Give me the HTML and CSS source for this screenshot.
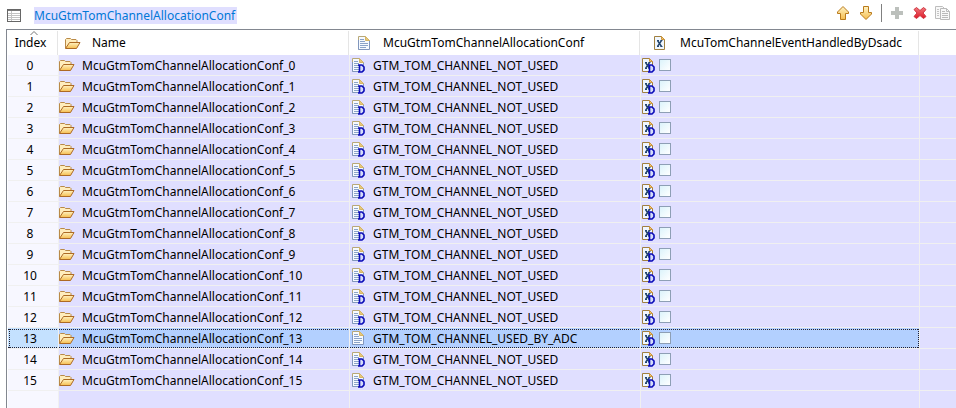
FILE: index.html
```
<!DOCTYPE html>
<html lang="en">
<head>
<meta charset="utf-8">
<title>McuGtmTomChannelAllocationConf</title>
<link rel="stylesheet" href="styles.css">
</head>
<body>
<svg class="sprites" aria-hidden="true">
  <defs>
    <linearGradient id="gold" x1="0" y1="0" x2="0" y2="1">
      <stop offset="0" stop-color="#fff3c4"/><stop offset="1" stop-color="#f5bd4e"/>
    </linearGradient>
    <linearGradient id="red" x1="0" y1="0" x2="0" y2="1">
      <stop offset="0" stop-color="#f0787d"/><stop offset="1" stop-color="#dd1826"/>
    </linearGradient>
    <symbol id="folder" viewBox="0 0 16 16">
      <path d="M.5 13V4.500l1-1h4l1 1h4.500l1 1v2" fill="#ffedbd" stroke="#b98a48"/>
      <path d="M.5 13.500l4-6h10.500l-3.500 6z" fill="url(#gold)" stroke="#ad6a24"/>
    </symbol>
    <symbol id="doc" viewBox="0 0 16 16">
      <path d="M.5 1.500h7l4 4v9H.5z" fill="#f6faff"/>
      <path d="M.5 14.500v-13h7l4 4" fill="none" stroke="#b8a878"/>
      <path d="M.5 5v9.500h11V5.500" fill="none" stroke="#8196bd"/>
      <path d="M7.500 1.500v4h4z" fill="#e6c87c" stroke="#d5b566"/>
      <path d="M2 4.500h4M2 6.500h5M2 8.500h8M2 10.500h8M2 12.500h6" stroke="#8ba3c8"/>
    </symbol>
    <symbol id="xdoc" viewBox="0 0 16 16">
      <path d="M.5 1.500h7l3 3v10H.5z" fill="#f0f7ff" stroke="#a08040"/>
      <path d="M7.500 1.500v3h3z" fill="#f0c878" stroke="#cc963d"/>
      <path d="M3 5.500h2M6.500 5.500h2M3 11.500h2M6.500 11.500h2" stroke="#24466f"/>
      <path d="M3.500 5.500l4 6M7.500 5.500l-4 6" stroke="#24466f" stroke-width="1.400"/>
    </symbol>
    <symbol id="badge" viewBox="0 0 16 16">
      <path d="M7 8h3.500l2 2v3l-2 2H7z" fill="#d5dcfa"/>
      <path d="M6 8h4l2 2v3l-2 2H6M7.500 8v7" fill="none" stroke="#0a0ab8" stroke-width="1.600"/>
    </symbol>
  </defs>
</svg>

<header class="bar">
  <svg class="list-icon" viewBox="0 0 14 13" aria-hidden="true">
    <rect x=".5" y=".5" width="13" height="12" fill="#fff" stroke="#666"/>
    <path d="M1 1.500h12" stroke="#777"/>
    <path d="M1 4.500h12M1 6.500h12M1 8.500h12M1 10.500h12M4.500 2v10" stroke="#c2c2c2"/>
  </svg>
  <a class="title" href="#list">McuGtmTomChannelAllocationConf</a>
  <div class="tools">
    <button type="button" class="tool" aria-label="Move up">
      <svg viewBox="0 0 16 16"><path d="M8 1.500l5.500 5.500v1.500H10.500v6h-5v-6H2.500V7z" fill="url(#gold)" stroke="#b97a1c"/></svg>
    </button>
    <button type="button" class="tool" aria-label="Move down">
      <svg viewBox="0 0 16 16"><path d="M8 14.500L2.500 9V7.500H5.500v-6h5v6h3V9z" fill="url(#gold)" stroke="#b97a1c"/></svg>
    </button>
    <span class="divider"></span>
    <button type="button" class="tool" aria-label="Add" disabled>
      <svg viewBox="0 0 16 16"><path d="M6 2h4v4h4v4h-4v4H6v-4H2V6h4z" fill="#bcc0bc"/></svg>
    </button>
    <button type="button" class="tool" aria-label="Delete">
      <svg viewBox="0 0 16 16"><path d="M4.500 2.500L8 5.500l3.500-3 2.500 2L11 8l3 3.500-2.500 2L8 10.500l-3.500 3L2 11.500 5 8 2 4.500z" fill="url(#red)" stroke="#cf3540"/></svg>
    </button>
    <button type="button" class="tool" aria-label="Duplicate" disabled>
      <svg viewBox="0 0 16 16">
        <path d="M.5 1.500h7l3 3v9H.5z" fill="#f8f8f8" stroke="#bdbdbd"/>
        <path d="M2 4.500h2M2 6.500h2M2 8.500h2M2 10.500h2" stroke="#c4c4c4"/>
        <path d="M5.500 3.500h6l3 3v8h-9z" fill="#f8f8f8" stroke="#bababa"/>
        <path d="M11.500 3.500v3h3M7 6.500h3M7 8.500h6M7 10.500h6M7 12.500h6" fill="none" stroke="#bababa"/>
      </svg>
    </button>
  </div>
</header>

<main class="panel" id="list">
  <table>
    <colgroup><col class="c-index"><col class="c-name"><col class="c-conf"><col class="c-event"><col></colgroup>
    <thead>
      <tr>
        <th class="index" aria-sort="ascending">
          <svg class="sort" viewBox="0 0 8 4" aria-hidden="true"><path d="M.5 4L4 .5 7.500 4" fill="none" stroke="#777"/></svg>Index</th>
        <th><div class="head"><svg class="icon" aria-hidden="true"><use href="#folder"/></svg>Name</div></th>
        <th><div class="head wide"><svg class="icon" aria-hidden="true"><use href="#doc"/></svg>McuGtmTomChannelAllocationConf</div></th>
        <th><div class="head wider"><svg class="icon" aria-hidden="true"><use href="#xdoc"/></svg>McuTomChannelEventHandledByDsadc</div></th>
        <td></td>
      </tr>
    </thead>
    <tbody id="rows"></tbody>
  </table>
</main>
<script src="rows.js"></script>
</body>
</html>
```
FILE: styles.css
```
* {
  box-sizing: border-box;
}

body {
  margin: 0;
  height: 100vh;
  display: flex;
  flex-direction: column;
  overflow: hidden;
  background: #fff;
  color: #000;
  font: 12px/17px "Noto Sans", "Open Sans", sans-serif;
}

.sprites {
  position: absolute;
  width: 0;
  height: 0;
}

.bar {
  display: flex;
  align-items: center;
  height: 29px;
  padding: 1px 5px 0 7px;
}

.list-icon {
  width: 14px;
  height: 13px;
  margin-right: 13px;
}

.title {
  padding-right: 2px;
  background: #e0dfff;
  color: #0078d7;
  text-decoration: none;
}

.tools {
  display: flex;
  align-items: center;
  gap: 7px;
  margin-left: auto;
  padding-bottom: 4px;
}

.tool {
  width: 16px;
  height: 16px;
  padding: 0;
  border: 0;
  background: none;
}

.tool svg {
  display: block;
  width: 16px;
  height: 16px;
}

.divider {
  width: 1px;
  height: 18px;
  background: #808080;
}

.panel {
  flex: 1;
  margin-left: 6px;
  padding-left: 1px;
  border-top: 1px solid #828790;
  border-left: 1px solid #828790;
}

table {
  width: 100%;
  height: 100%;
  table-layout: fixed;
  border-collapse: separate;
  border-spacing: 0;
}

.c-index {
  width: 51px;
}

.c-name,
.c-conf {
  width: 291px;
}

.c-event {
  width: 279px;
}

th,
td {
  padding: 0;
  font-weight: normal;
  text-align: left;
  white-space: nowrap;
}

thead tr {
  height: 25px;
}

th {
  position: relative;
  background: linear-gradient(#e5e5e5, #e5e5e5) right 1px bottom / 1px 24px no-repeat;
}

.index {
  padding-right: 6px;
  text-align: center;
}

.sort {
  position: absolute;
  top: 1px;
  left: 22px;
  width: 8px;
  height: 4px;
}

.head {
  display: flex;
  align-items: center;
  gap: 11px;
  padding-left: 6px;
}

.wide {
  gap: 9px;
  padding-left: 8px;
}

.wider {
  gap: 10px;
  padding-left: 13px;
}

.icon {
  flex: none;
  width: 16px;
  height: 16px;
}

tbody tr {
  height: 21px;
}

tbody tr.rest {
  height: auto;
}

tbody td {
  background-color: #e0dfff;
  border-right: 1px solid #f0f0f0;
  border-bottom: 1px solid #f0f0f0;
}

tbody .index {
  background-color: #f7f7ff;
}

.rest td {
  border-bottom: 0;
}

tbody td:last-child {
  border-right: 0;
}

.cell {
  display: flex;
  align-items: center;
  gap: 7px;
}

.value {
  gap: 5px;
  padding-left: 2px;
}

.flag {
  gap: 1px;
  padding-left: 1px;
}

.cell input {
  appearance: none;
  width: 12px;
  height: 12px;
  margin: 0;
  border: 1px solid #8e9fb5;
  background: linear-gradient(135deg, #dcf3fb, #fff);
}

/* Selected row: dotted focus frame across the four data columns */
.selected td:not(:last-child) {
  background-color: #b3d0ff;
  background-image:
    repeating-linear-gradient(90deg, #223 0 1px, transparent 1px 2px),
    repeating-linear-gradient(90deg, #223 0 1px, transparent 1px 2px);
  background-position: left 0 top 1px, left 0 bottom 0;
  background-size: 100% 1px;
  background-repeat: no-repeat;
}

.selected td.index {
  background-color: #c4e1ff;
}

.selected .index,
.selected .event {
  position: relative;
}

.selected .index::before,
.selected .event::before {
  content: "";
  position: absolute;
  top: 1px;
  bottom: 0;
  left: 1px;
  width: 1px;
  background: repeating-linear-gradient(#223 0 1px, transparent 1px 2px);
}

.selected .event::before {
  right: 0;
  left: auto;
}
```
FILE: rows.js
```
const icon = (...names) =>
  `<svg class="icon" aria-hidden="true">${names.map(n => `<use href="#${n}"/>`).join("")}</svg>`;

const rows = Array.from({ length: 16 }, (_, i) => {
  const used = i === 13;
  return `<tr${used ? ' class="selected"' : ""}>
    <td class="index">${i}</td>
    <td><div class="cell">${icon("folder")}McuGtmTomChannelAllocationConf_${i}</div></td>
    <td><div class="cell value">${used ? icon("doc") : icon("doc", "badge")}${used ? "GTM_TOM_CHANNEL_USED_BY_ADC" : "GTM_TOM_CHANNEL_NOT_USED"}</div></td>
    <td class="event"><div class="cell flag">${icon("xdoc", "badge")}<input type="checkbox" aria-label="Event handled by DSADC, row ${i}"></div></td>
    <td></td>
  </tr>`;
});

document.getElementById("rows").innerHTML =
  rows.join("") + '<tr class="rest"><td class="index"></td><td></td><td></td><td></td><td></td></tr>';
```
